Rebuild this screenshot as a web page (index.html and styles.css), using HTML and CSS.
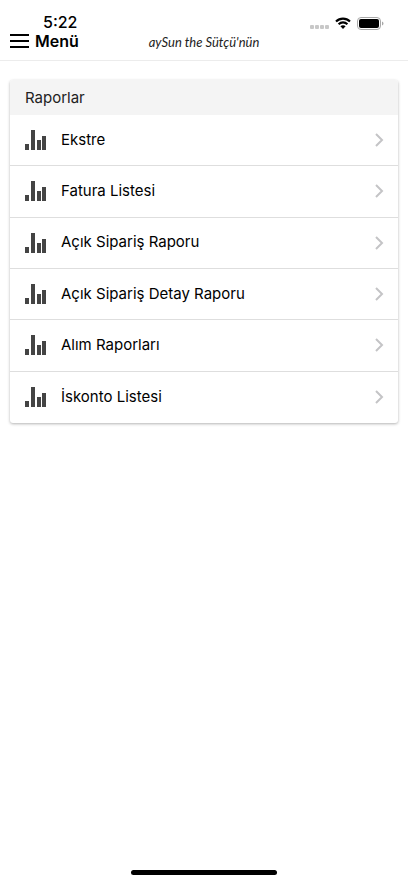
FILE: index.html
```
<!DOCTYPE html>
<html lang="tr">
<head>
  <meta charset="UTF-8">
  <meta name="viewport" content="width=device-width, initial-scale=1.0">
  <title>Raporlar</title>
  <link rel="stylesheet" href="styles.css">
</head>
<body>

  <svg class="symbols" aria-hidden="true">
    <symbol id="chart" viewBox="0 0 22 20">
      <path d="M0 14h4v6H0zM6 0h4v20H6zM12 10h4v10h-4zM17 6h4v14h-4z" fill="#444"/>
    </symbol>
    <symbol id="arrow" viewBox="0 0 9 14">
      <path d="M1 1l6 6-6 6" fill="none" stroke="#c4c4c6" stroke-width="2"/>
    </symbol>
  </svg>

  <header class="topbar">
    <div class="left">
      <span class="time">5:22</span>
      <button type="button" class="menu-button">
        <svg width="19" height="14" viewBox="0 0 19 14" aria-hidden="true">
          <path d="M0 1h19M0 7h19M0 13h19" stroke="#000" stroke-width="2"/>
        </svg>
        Menü
      </button>
    </div>
    <div class="logo">aySun the Sütçü'nün</div>
    <div class="status">
      <svg class="signal" width="19" height="4" viewBox="0 0 19 4">
        <g fill="#c8c8c8">
          <rect width="4" height="4" rx="1"/>
          <rect x="5" width="4" height="4" rx="1"/>
          <rect x="10" width="4" height="4" rx="1"/>
          <rect x="15" width="4" height="4" rx="1"/>
        </g>
      </svg>
      <svg width="16" height="12" viewBox="0 0 16 12">
        <path d="M1 4.6C5 .6 11 .6 15 4.6M3.6 7.2c2.5-2.4 6.3-2.4 8.8 0" fill="none" stroke="#000" stroke-width="2.1"/>
        <path d="M5.4 9.2c1.5-1.3 3.7-1.3 5.2 0L8 12z"/>
      </svg>
      <svg width="27" height="13" viewBox="0 0 27 13">
        <rect x=".5" y=".5" width="23" height="12" rx="3.5" fill="#fff" stroke="#a8a8a8"/>
        <rect x="2" y="2" width="20" height="9" rx="2"/>
        <path d="M25 4.5c2 .7 2 3.3 0 4z" fill="#a8a8a8"/>
      </svg>
    </div>
  </header>

  <main>
    <section class="card">
      <h1>Raporlar</h1>
      <nav class="list">
        <a href="#ekstre">
          <svg class="chart"><use href="#chart"/></svg>
          <span>Ekstre</span>
          <svg class="arrow"><use href="#arrow"/></svg>
        </a>
        <a href="#fatura">
          <svg class="chart"><use href="#chart"/></svg>
          <span>Fatura Listesi</span>
          <svg class="arrow"><use href="#arrow"/></svg>
        </a>
        <a href="#siparis">
          <svg class="chart"><use href="#chart"/></svg>
          <span>Açık Sipariş Raporu</span>
          <svg class="arrow"><use href="#arrow"/></svg>
        </a>
        <a href="#siparis-detay">
          <svg class="chart"><use href="#chart"/></svg>
          <span>Açık Sipariş Detay Raporu</span>
          <svg class="arrow"><use href="#arrow"/></svg>
        </a>
        <a href="#alim">
          <svg class="chart"><use href="#chart"/></svg>
          <span>Alım Raporları</span>
          <svg class="arrow"><use href="#arrow"/></svg>
        </a>
        <a href="#iskonto">
          <svg class="chart"><use href="#chart"/></svg>
          <span>İskonto Listesi</span>
          <svg class="arrow"><use href="#arrow"/></svg>
        </a>
      </nav>
    </section>
  </main>

  <div class="home-bar"></div>

</body>
</html>
```
FILE: styles.css
```
* {
  box-sizing: border-box;
}

body {
  margin: 0;
  min-height: 100vh;
  display: flex;
  flex-direction: column;
  background-color: #fff;
  color: #000;
  font-family: Inter, "Liberation Sans", sans-serif;
  font-size: 15px;
}

.symbols {
  display: none;
}

.topbar {
  display: grid;
  grid-template-columns: 1fr auto 1fr;
  padding: 13px 10px 10px;
  border-bottom: 1px solid #ececec;
}

.left {
  display: flex;
  flex-direction: column;
  align-items: flex-start;
}

.time {
  padding-left: 33px;
  font-size: 16px;
  font-weight: 500;
  line-height: 19px;
}

.menu-button {
  display: flex;
  align-items: center;
  gap: 6px;
  padding: 0;
  border: 0;
  background: none;
  color: #000;
  font: 600 16px/18px Inter, "Liberation Sans", sans-serif;
  cursor: pointer;
}

.logo {
  align-self: end;
  color: #222;
  font-family: Lato, sans-serif;
  font-size: 13px;
  font-style: italic;
  line-height: 16px;
}

.status {
  display: flex;
  justify-content: flex-end;
  align-items: center;
  gap: 6px;
  height: 20px;
  padding-right: 14px;
}

.signal {
  margin-top: 8px;
}

main {
  flex: 1;
  padding: 19px 10px;
}

.card {
  border-radius: 3px;
  overflow: hidden;
  box-shadow: 0 1px 3px rgba(0, 0, 0, 0.3);
}

.card h1 {
  margin: 0;
  padding: 0 15px;
  background-color: #f4f4f4;
  color: #222;
  font-size: 15px;
  font-weight: 400;
  line-height: 35px;
}

.list {
  display: grid;
  grid-auto-rows: 1fr;
  min-height: 308px;
}

.list a {
  display: flex;
  align-items: center;
  padding: 0 14px 0 15px;
  border-bottom: 1px solid #dedede;
  color: #000;
  text-decoration: none;
}

.list a:last-child {
  border-bottom: 0;
}

.list span {
  flex: 1;
  padding-bottom: 2px;
}

.chart {
  width: 22px;
  height: 20px;
  margin-right: 14px;
}

.arrow {
  width: 9px;
  height: 14px;
}

.home-bar {
  width: 36%;
  height: 5px;
  margin: 0 auto 8px;
  border-radius: 3px;
  background-color: #000;
}
```
